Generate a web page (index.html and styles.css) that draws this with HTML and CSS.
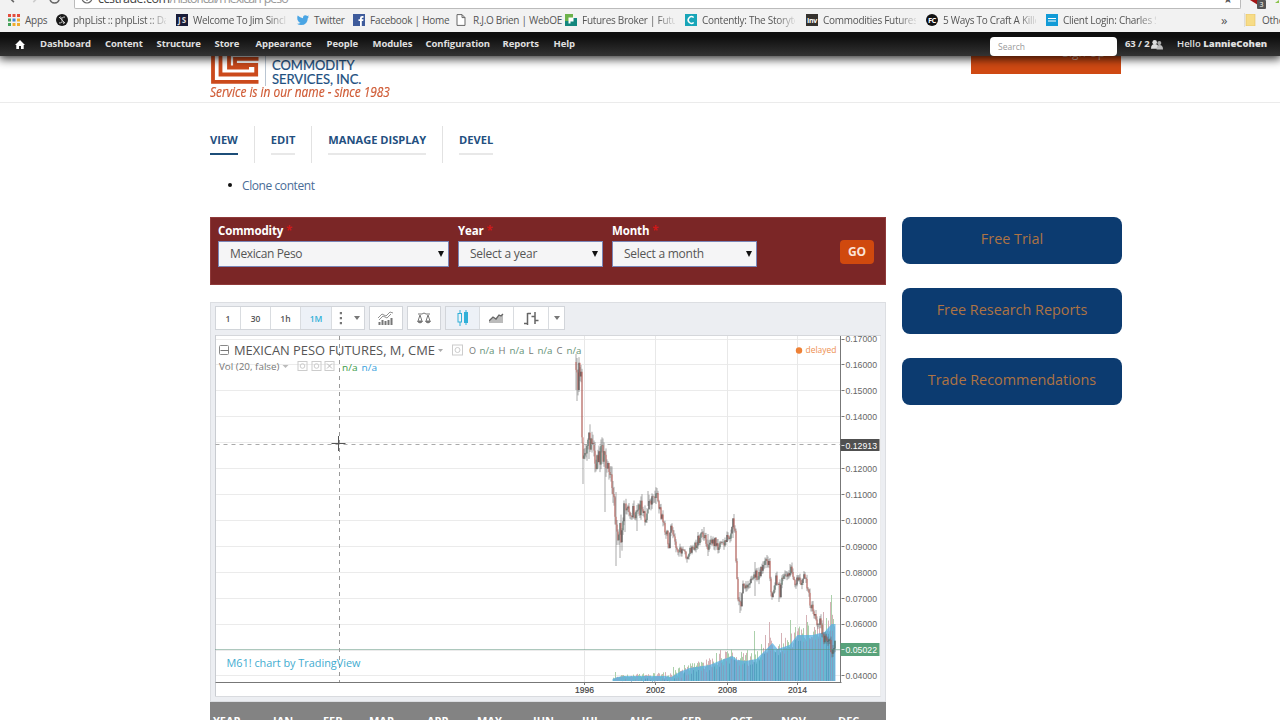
FILE: index.html
```html
<!DOCTYPE html>
<html lang="en">
<head>
<meta charset="utf-8">
<title>Mexican Peso</title>
<link rel="stylesheet" href="styles.css">
</head>
<body>
<div class="browser">
  <div class="address-row">
    <svg class="nav-icons" width="80" height="6" viewBox="0 0 80 6" fill="none" stroke-width="1.7">
      <path d="M9 -4 L15 2" stroke="#666"/><path d="M42 -4 L36 2" stroke="#ccc"/>
      <circle cx="59" cy="-2" r="5" stroke="#666"/>
    </svg>
    <div class="address"><svg width="12" height="12" viewBox="0 0 12 12" fill="none" stroke="#666" stroke-width="1.2"><circle cx="6" cy="6" r="5"/><path d="M6 5v4M6 2.5v1.2"/></svg><span><b>ccstrade.com</b>/historical/mexican-peso</span><i>★</i></div>
    <svg class="ext" width="38" height="10" viewBox="0 0 38 10"><path d="M9 0h10v2l-2 3z" fill="#a31414"/><rect x="16" y="0" width="9" height="9" rx="1" fill="#555"/><text x="18.500" y="7" font-size="7" fill="#fff" font-family="Open Sans">3</text><path d="M34 3l4-3v3z" fill="#8bc34a"/></svg>
  </div>
  <div class="bookmarks">
    <div class="bm"><svg viewBox="0 0 12 12"><g><path fill="#e34d3d" d="M0 0h3v3H0zM4.5 0h3v3h-3zM9 0h3v3H9z"/><path fill="#45a35b" d="M0 4.5h3v3H0z"/><path fill="#4285d6" d="M4.500 4.500h3v3h-3z"/><path fill="#efad2e" d="M9 4.500h3v3H9zM4.500 9h3v3h-3zM9 9h3v3H9z"/><path fill="#45a35b" d="M0 9h3v3H0z"/></g></svg><span>Apps</span></div>
    <div class="bm fade"><svg viewBox="0 0 12 12"><circle cx="6" cy="6" r="6" fill="#1a1a1a"/><path d="M3 3l6 6M9 3q-4 0-3 3t-3 3M4.500 2.500l1 2M7 8l1 2" stroke="#ccc" fill="none"/></svg><span>phpList :: phpList :: Da</span></div>
    <div class="bm fade"><svg viewBox="0 0 12 12"><rect width="12" height="12" fill="#191c38"/><text x="2" y="9" font-size="8" font-weight="700" font-family="Open Sans" fill="#ddd" textLength="8">JS</text></svg><span>Welcome To Jim Sincl</span></div>
    <div class="bm"><svg viewBox="0 0 12 12"><path d="M0 9.700Q2 10 3.500 8.700 1.600 8.500 1.200 7 .1 5.800.3 4.300 0 3 .7 1.600 3 4 6 4.200 5.800 1.300 8.300 1.300q1.200 0 1.900.8l1.700-.6-1 1.500 1.100-.2-1.200 1.400Q10.500 11 4 11 1.700 10.900 0 9.700z" fill="#4aa5e4"/></svg><span>Twitter</span></div>
    <div class="bm"><svg viewBox="0 0 12 12"><rect width="12" height="12" fill="#3e5b9b"/><path d="M7 12V7H5.500V5.200H7V4q0-2 2.100-2h1.400v1.800h-1q-.7 0-.7.700v.7h1.700L10.200 7H8.800v5z" fill="#fff"/></svg><span>Facebook | Home</span></div>
    <div class="bm"><svg viewBox="0 0 12 12"><path d="M1 .6h5l3 3v7.800H1zM6 .6v3h3" fill="#fff" stroke="#666"/></svg><span>R.J.O Brien | WebOE</span></div>
    <div class="bm fade"><svg viewBox="0 0 12 12"><path fill="#6cb24b" d="M0 0h8v7H0z"/><path fill="#13877d" d="M0 7h8V4h4v8H0z"/><path fill="#fff" d="M3.500 3.500h5v4h-3v2h-2z"/></svg><span>Futures Broker | Future</span></div>
    <div class="bm fade"><svg viewBox="0 0 12 12"><rect width="12" height="12" fill="#18a5b8"/><path d="M8.700 3.500A3.300 3.300 0 1 0 8.700 8.500" stroke="#fff" stroke-width="1.500" fill="none"/></svg><span>Contently: The Storyte</span></div>
    <div class="bm fade"><svg viewBox="0 0 12 12"><rect width="12" height="12" fill="#35322e"/><text x="1" y="9" font-size="7" font-weight="700" font-family="Open Sans" fill="#fff" textLength="10">Inv</text></svg><span>Commodities Futures</span></div>
    <div class="bm fade"><svg viewBox="0 0 12 12"><circle cx="6" cy="6" r="6" fill="#111"/><text x="2" y="8.700" font-size="7.500" font-weight="700" font-family="Open Sans" fill="#fff" textLength="8">FC</text></svg><span>5 Ways To Craft A Kille</span></div>
    <div class="bm fade"><svg viewBox="0 0 12 12"><rect width="12" height="12" fill="#129bd7"/><path d="M2 4.500h8M2 7h8" stroke="#fff" stroke-width="1.200"/></svg><span>Client Login: Charles S</span></div>
    <div class="more">»</div>
    <div class="bm other"><svg viewBox="0 0 12 12"><rect x="1" width="9" height="12" fill="#f7dc86" stroke="#e3c062" stroke-width=".6"/></svg><span>Other bookmarks</span></div>
  </div>
</div>
<nav class="admin">
  <div class="menu">
    <svg width="10" height="9" viewBox="0 0 10 9"><path d="M5 0L0 5h1.300v4H4V6h2v3h2.700V5H10z" fill="#fff"/></svg>
    <a>Dashboard</a><a>Content</a><a>Structure</a><a>Store</a><a>Appearance</a><a>People</a><a>Modules</a><a>Configuration</a><a>Reports</a><a>Help</a>
  </div>
  <div class="search">Search</div>
  <div class="users">63 / 2<svg width="12" height="11" viewBox="0 0 13 11"><circle cx="4" cy="3" r="2.500" fill="#ddd"/><path d="M0 10q0-5 4-5t5 5z" fill="#ddd"/><circle cx="9" cy="4" r="2.200" fill="#aaa"/><path d="M6 11q0-5 3.500-5t3.500 5z" fill="#bbb"/></svg></div>
  <div class="hello">Hello <b>LannieCohen</b></div>
</nav>
<header class="site-header">
  <div class="wrap">
    <div class="logo">
      <div class="logo-top">
        <svg width="48" height="34" viewBox="211 50 48 34" fill="none" stroke="#cb4a1c" stroke-width="3.800"><path d="M213 50V81.800H258.500M220.500 50V74.500H256.200V65H235V58.800H258.500"/><path d="M229 50V67.500H249"/></svg>
        <div class="logo-name"><span>CAPITOL</span><span>COMMODITY</span><span>SERVICES, INC.</span></div>
      </div>
      <div class="tagline">Service is in our name - since 1983</div>
    </div>
    <div class="signup"><span>Sign Up</span></div>
  </div>
</header>
<main class="wrap main">
  <div class="content">
    <div class="tabs"><div><a class="on">VIEW</a></div><div><a>EDIT</a></div><div><a>MANAGE DISPLAY</a></div><div><a>DEVEL</a></div></div>
    <div class="clone"><i></i><a>Clone content</a></div>
    <form class="filter">
      <div><label>Commodity <em>*</em></label><div class="select">Mexican Peso<i></i></div></div>
      <div><label>Year <em>*</em></label><div class="select">Select a year<i></i></div></div>
      <div><label>Month <em>*</em></label><div class="select">Select a month<i></i></div></div>
      <div class="go">GO</div>
    </form>
    <section class="widget">
      <div class="tools">
        <div class="group g1"><span>1</span><span>30</span><span>1h</span><span class="sel">1M</span><span><svg width="4" height="14" viewBox="0 0 4 14"><path d="M.8 1h2.200v2.200H.8zM.8 6h2.200v2.200H.8zM.8 11h2.200v2.200H.8z" fill="#777"/></svg></span><span><i class="caret"></i></span></div>
        <div class="group g2"><span><svg width="16" height="14" viewBox="0 0 16 14" fill="none" stroke="#777"><path d="M1.500 14v-3M4.500 14v-5M7.500 14v-4M10.500 14v-5M13.500 14V7" stroke-width="2"/><path d="M0 7l4-4 4 2 4-4 3 1M1 9l4-4 4 2 4-4" stroke-width=".8"/></svg></span></div>
        <div class="group g2"><span><svg width="14" height="12" viewBox="0 0 14 12" fill="none" stroke="#777"><path d="M1 2h4l2-1 2 1h4M3 3L1 9h4zM11 3L9 9h4z"/><path d="M.5 9.500q2.500 3 5 0zM8.500 9.500q2.500 3 5 0z" fill="#777"/></svg></span></div>
        <div class="group g3"><span class="sel"><svg width="12" height="16" viewBox="0 0 12 16" fill="none" stroke="#31b0d8"><path d="M3 0v3m0 9v4M9 0v2m0 11v2"/><rect x="1" y="3.500" width="3.500" height="8.500"/><rect x="7.500" y="2.500" width="3" height="10" fill="#31b0d8"/></svg></span><span><svg width="15" height="10" viewBox="0 0 15 10"><path d="M0 8l4-4 3 2 3-3 4-2v9H0z" fill="#bbb"/><path d="M0 8l4-4 3 2 3-4 2 1 2-2" stroke="#666" stroke-width="1.300" fill="none"/></svg></span><span><svg width="15" height="15" viewBox="0 0 15 15" fill="none" stroke="#666" stroke-width="1.500"><path d="M3.500 2v12M0 12.500h3.500M3.500 2.500h3.500M11 1v12M7.500 5.500H11M11 9.500h3.500"/></svg></span><span><i class="caret"></i></span></div>
      </div>
      <svg class="chart" id="chart" width="666" height="362" viewBox="215.500 335 666 362"></svg>
    </section>
    <div class="months"><span>YEAR</span><span>JAN</span><span>FEB</span><span>MAR</span><span>APR</span><span>MAY</span><span>JUN</span><span>JUL</span><span>AUG</span><span>SEP</span><span>OCT</span><span>NOV</span><span>DEC</span></div>
  </div>
  <aside><a>Free Trial</a><a>Free Research Reports</a><a>Trade Recommendations</a></aside>
</main>
<script src="chart.js"></script>
</body>
</html>
```
FILE: styles.css
```css
* { box-sizing: border-box; }
body { margin: 0; width: 1280px; height: 720px; overflow: hidden; background: #fff; font-family: "Open Sans", "Noto Sans", sans-serif; color: #444; }
.wrap { width: 912px; margin-left: 210px; display: flex; }

.browser { height: 32px; background: #f2f2f2; overflow: hidden; }
.address-row { height: 9px; display: flex; }
.nav-icons { width: 74px; height: 6px; overflow: hidden; flex: none; }
.address { width: 1167px; height: 9px; flex: none; border: 1px solid #bbb; border-top: 0; background: #fff; display: flex; align-items: flex-end; padding-left: 6px; gap: 5px; overflow: hidden; border-radius: 0 0 2px 2px; font: 12.500px/14px "Open Sans", sans-serif; color: #999; }
.address svg { margin-bottom: 4px; flex: none; }
.address span { width: 1126px; margin-bottom: 2px; flex: none; letter-spacing: -1.050px; }
.address b { font-weight: 400; color: #444; letter-spacing: -.5px; }
.address i { font-style: normal; color: #555; margin: 0 0 2px -6px; font-size: 11px; }
.bookmarks { height: 22px; display: grid; grid-template-columns: 48px 120px 121px 56px 103px 109px 120px 121px 120px 120px 172px 26px 1fr; padding-left: 8px; align-items: center; font-size: 10px; color: #555; }
.bm { display: flex; gap: 5px; align-items: center; white-space: nowrap; overflow: hidden; letter-spacing: -.28px; }
.bm svg { width: 12px; height: 12px; flex: none; }
.fade span { width: 93px; overflow: hidden; -webkit-mask-image: linear-gradient(90deg, #000 80%, rgba(0,0,0,.15) 100%); mask-image: linear-gradient(90deg, #000 80%, rgba(0,0,0,.15) 100%); }
.more { font-size: 13px; padding-left: 3px; line-height: 18px; }
.other { border-left: 1px solid #ddd; height: 14px; }

.admin { position: relative; height: 24px; display: grid; grid-template-columns: 990px 127px 60px 1fr; background: linear-gradient(#0e0e0e 20%, #333); box-shadow: 0 2px 10px 1px rgba(0,0,0,.8); clip-path: inset(0 0 -14px 0); color: #e0e0e0; font-size: 9.500px; font-weight: 700; z-index: 3; line-height: 24px; }
.menu { display: grid; grid-template-columns: 25px 65px 51.500px 58px 41px 71px 46px 53px 77px 51px 40px; padding-left: 15px; align-items: center; letter-spacing: -.08px; }
.menu svg { display: block; }
.search { height: 19px; margin-top: 5px; border-radius: 4px; background: #fff; color: #999; font-size: 8.500px; font-weight: 400; line-height: 20px; padding-left: 8px; }
.users { padding-left: 8px; display: flex; align-items: center; white-space: nowrap; letter-spacing: -.1px; }
.users svg { margin-left: 1px; }
.hello { font-weight: 600; white-space: nowrap; }

.site-header { height: 47px; border-bottom: 1px solid #ebebeb; }
.site-header .wrap { justify-content: space-between; align-items: flex-start; width: 911px; }
.logo { margin-top: -6px; }
.logo-top { display: flex; height: 34px; margin-left: 1px; gap: 6px; }
.logo-name { border-left: 1px solid #b9c5d2; padding-left: 6px; display: flex; flex-direction: column; justify-content: flex-end; font: 13px/14px Lato, sans-serif; color: #214f80; -webkit-text-stroke: .2px #214f80; white-space: nowrap; height: 36px; letter-spacing: -.03px; }
.tagline { font: italic 14px/16px "Open Sans", sans-serif; color: #cf5a34; transform: scaleX(.85); transform-origin: 0 0; white-space: nowrap; -webkit-text-stroke: .2px #cf5a34; letter-spacing: -.02px; }
.signup { width: 150px; height: 18px; background: #cf4913; color: #e9b49e; display: flex; justify-content: flex-end; align-items: flex-start; padding-right: 16px; font-size: 12px; line-height: 1; }
.signup span { margin-top: -9px; }

.main { height: 617px; gap: 16px; }
.content { width: 676px; }
.tabs { display: flex; margin-top: 23px; height: 37px; color: #234f80; font-size: 11.100px; font-weight: 700; }
.tabs div { padding-right: 16px; margin-right: 16px; border-right: 1px solid #e2e2e2; }
.tabs div:last-child { border: 0; }
.tabs a { display: block; height: 29px; line-height: 27px; border-bottom: 2px solid #e8e8e8; white-space: nowrap; }
.tabs a.on { border-color: #1c4d78; }
.clone { display: flex; align-items: center; gap: 10px; margin: 13px 0 0 18px; height: 18px; font-size: 12px; letter-spacing: -.42px; color: #4a6c97; }
.clone i { width: 4px; height: 4px; border-radius: 50%; background: #111; }
.filter { margin: 23px 0 0; height: 68px; background: #7b2626; border: 1px solid #8f3a3a; display: grid; grid-template-columns: 240px 154px 228px 34px; padding: 4px 0 0 7px; color: #fff; font-size: 11.500px; letter-spacing: -.15px; font-weight: 700; }
.filter label { display: block; height: 19px; line-height: 18px; }
.filter em { color: #d01818; font-style: normal; }
.select { width: 231px; height: 26px; border: 1px solid #7a86b8; background: #f5f5f6; color: #555; font-size: 12px; letter-spacing: -.38px; font-weight: 400; line-height: 24px; padding: 0 4px 0 11px; display: flex; justify-content: space-between; align-items: center; }
.select i { border: 3px solid transparent; border-top: 6px solid #111; border-bottom: 0; }
.filter div:nth-child(2) .select, .filter div:nth-child(3) .select { width: 145px; letter-spacing: -.25px; }
.go { width: 34px; height: 24px; margin-top: 18px; border-radius: 4px; background: #d0490e; text-align: center; line-height: 23px; font-size: 12px; color: #fbe3d8; }

.widget { margin-top: 17px; height: 400px; background: #eceef2; border: 1px solid #dcdee2; padding: 3px 4px 0; }
.tools { display: flex; gap: 4px; height: 25px; margin-bottom: 4px; color: #555; font-size: 8.500px; font-weight: 600; }
.group { display: grid; height: 24px; border: 1px solid #d2d5da; background: #fff; }
.group span { display: flex; align-items: center; justify-content: center; border-right: 1px solid #d9dce0; }
.group span:last-child, .g1 span:nth-child(5) { border: 0; }
.g1 { width: 150px; grid-template-columns: 25px 30px 30px 31px 17px 1fr; }
.g2 { width: 34px; }
.g3 { width: 120px; grid-template-columns: 34px 34px 35px 1fr; }
.group .sel { background: #edf1f7; color: #31b0d8; }
.caret { border: 3.500px solid transparent; border-top: 4px solid #777; border-bottom: 0; }
.chart { display: block; background: #fff; font-family: "Open Sans", sans-serif; }
.months { height: 18px; background: #838383; color: #fff; font-size: 11px; font-weight: 700; display: grid; grid-template-columns: 60px 50px 46px 58px 50px 56px 49px 47px 53px 48px 51px 57px 1fr; padding: 10.500px 0 0 3px; line-height: 15px; overflow: hidden; }

aside { width: 220px; padding-top: 114px; display: flex; flex-direction: column; gap: 24px; }
aside a { height: 46.500px; border-radius: 8px; background: #0c3b70; color: #ae7344; font-size: 14.400px; line-height: 44px; text-align: center; flex: none; }
```
FILE: chart.js
```js
const NS = 'http://www.w3.org/2000/svg';
const chart = document.getElementById('chart');
function add(tag, attrs, text) {
  const el = document.createElementNS(NS, tag);
  for (const k in attrs) el.setAttribute(k, attrs[k]);
  if (text) el.textContent = text;
  chart.appendChild(el);
}
function path(d, stroke, extra) {
  add('path', Object.assign({ d: d, stroke: stroke, fill: 'none' }, extra));
}
function label(x, y, text, width, size, fill, extra) {
  add('text', Object.assign({ x: x, y: y, textLength: width, 'font-size': size, fill: fill, lengthAdjust: 'spacingAndGlyphs' }, extra), text);
}
let seed = 17;
function rnd() { seed = (seed * 16807) % 2147483647; return seed / 2147483647; }
function at(points, x) {
  for (let i = 1; i < points.length; i++) {
    if (x <= points[i][0]) {
      const a = points[i - 1], b = points[i];
      return a[1] + (b[1] - a[1]) * (x - a[0]) / (b[0] - a[0]);
    }
  }
  return points[points.length - 1][1];
}

// Grid
for (let i = 0; i < 14; i++) path('M216 ' + (Math.round(338.500 + i * 25.92) + .5) + 'H841', '#ebebeb');
[585, 656, 728, 798].forEach(x => path('M' + x + ' 336V682', '#e8e8e8'));

// Volume bars with moving-average area
const vol = [[613,679],[618,677],[625,676],[666,676],[672,677],[680,672],[690,668],[710,665],[722,660],[733,656],[738,660],[746,661],[757,659],[766,650],[773,643],[778,649],[790,645],[798,635],[813,635],[825,632],[832,624],[836,624]];
const volSpikes = { 616: 672, 674: 667, 717: 653, 721: 650, 727: 652, 748: 650, 755: 631, 766: 635, 770: 622, 782: 633, 791: 620, 796: 627, 807: 615, 808: 622, 815: 627, 824: 612, 827: 618, 831: 602, 832: 595, 834: 619 };
for (let x = 614; x < 836; x++) {
  const top = volSpikes[x] || at(vol, x) + (rnd() * 16 - 10) * Math.min(1, (x - 600) / 160);
  path('M' + x + ' ' + Math.min(top, 679).toFixed(1) + 'V681', rnd() > .5 ? '#d3adb2' : '#a6cda6', { 'stroke-width': .95 });
}
add('path', { d: 'M613 681L' + vol.map(p => p.join(' ')).join('L') + 'V681Z', fill: '#51aee2', opacity: .72 });
for (let x = 623; x < 835; x += 2 + Math.floor(rnd() * 2)) path('M' + x + ' ' + (at(vol, x) + 2 + rnd() * 5) + 'V681', rnd() > .5 ? '#8c8fb5' : '#3f91b2', { opacity: .55 });

// Monthly candles
const price = [[576,365],[577,376],[578,384],[579,370],[581,370],[582,430],[583,462],[584,457],[586,446],[589,440],[592,448],[595,462],[600,456],[604,452],[606,463],[609,477],[612,485],[614,495],[616,520],[617,537],[619,526],[621,536],[623,513],[626,509],[637,512],[641,507],[645,518],[648,504],[650,497],[654,503],[658,497],[661,515],[664,527],[667,535],[669,545],[671,530],[674,538],[677,549],[680,550],[686,556],[691,552],[698,540],[704,535],[708,547],[713,541],[719,546],[726,541],[731,533],[733,523],[735,532],[736,560],[738,595],[741,605],[743,587],[750,580],[754,572],[757,577],[762,568],[767,561],[769,562],[770,580],[772,598],[774,590],[776,580],[778,581],[780,596],[782,581],[787,576],[791,568],[794,580],[800,582],[804,578],[808,586],[810,605],[814,613],[818,627],[820,623],[824,640],[828,637],[832,652],[834,651],[835,640]];
const spikes = { 576: [354, 390], 577: [358, 401], 580: [367, 381], 583: [443, 484], 589: [432, 459], 605: [452, 512], 616: [492, 566], 617: [520, 545], 620: [523, 558], 625: [504, 532], 637: [505, 531], 648: [491, 506], 704: [527, 541], 708: [534, 556], 733: [518, 538], 740: [592, 613], 755: [562, 596], 767: [555, 568], 779: [582, 602], 790: [564, 577] };
let prev = 362;
for (let x = 576; x < 836; x++) {
  const mid = at(price, x);
  const scale = x < 625 ? 1.5 : x < 660 ? 1.15 : .75;
  const close = mid + (rnd() - .5) * 13 * scale;
  let hi = Math.min(prev, close) - rnd() * 6 * scale;
  let lo = Math.max(prev, close) + rnd() * 6 * scale;
  if (spikes[x]) { hi = spikes[x][0]; lo = spikes[x][1]; }
  path('M' + (x + .500) + ' ' + hi.toFixed(1) + 'V' + lo.toFixed(1), '#666', { 'stroke-width': .7, opacity: .8 });
  const falling = close > prev;
  path('M' + (x + .500) + ' ' + prev.toFixed(1) + 'V' + close.toFixed(1), falling ? '#c8453a' : rnd() > .5 ? '#3f5d50' : '#333', { 'stroke-width': falling ? .9 : 1.1, opacity: .85 });
  prev = close;
}

// Axes
path('M215.500 335.500H881.500V697', '#d5d7db');
path('M216 335V697', '#c9ccd1');
path('M215 696.500H881', '#d9dbdf');
path('M841 336V682M216 682.500H842', '#777');
['0.17000', '0.16000', '0.15000', '0.14000', '', '0.12000', '0.11000', '0.10000', '0.09000', '0.08000', '0.07000', '0.06000', '', '0.04000'].forEach((t, i) => {
  if (!t) return;
  const y = 338.500 + i * 25.92;
  path('M842 ' + (Math.round(y) + .5) + 'h3', '#777');
  label(846, y + 3.800, t, 31.500, 9.500, '#666', { 'font-family': 'Liberation Sans' });
});
[['1996', 575.5], ['2002', 646.500], ['2008', 718.500], ['2014', 788.500]].forEach(t => {
  label(t[1], 693.300, t[0], 19, 9, '#444', { 'font-family': 'Liberation Sans', stroke: '#444', 'stroke-width': .2 });
  path('M' + (t[1] + 9.500) + ' 682v3', '#777');
});

// Last price and crosshair
path('M216 649.500H841', '#5b907a', { 'stroke-dasharray': '1 1' });
path('M216 444.500H841', '#aaa', { 'stroke-dasharray': '4 4' });
path('M340 336V682', '#999', { 'stroke-dasharray': '4 4' });
path('M332 443.500H346M339 436V451', '#555', { 'stroke-width': 1 });
add('rect', { x: 841, y: 439, width: 39, height: 12, fill: '#505050' });
add('rect', { x: 841, y: 643, width: 39, height: 13, fill: '#58a27b' });
path('M842 445.500h3M842 649.500h3', '#ddd');
label(846, 448.500, '0.12913', 31.500, 9.500, '#fff', { 'font-family': 'Liberation Sans' });
label(846, 653, '0.05022', 31.500, 9.500, '#fff', { 'font-family': 'Liberation Sans' });

// Legend
add('rect', { x: 220, y: 345.500, width: 9, height: 9, rx: 1, fill: 'none', stroke: '#888' });
path('M221 350.500h8', '#777');
label(234.500, 355, 'MEXICAN PESO FUTURES, M, CME', 201, 12.500, '#555');
add('path', { d: 'M438.500 349h5l-2.500 3z', fill: '#aaa' });
add('rect', { x: 453, y: 345, width: 10, height: 10, fill: 'none', stroke: '#ccc' });
add('circle', { cx: 458, cy: 350, r: 2.500, fill: 'none', stroke: '#ccc' });
[['O', 469.500, 7], ['H', 499, 7], ['L', 529, 5], ['C', 557, 6]].forEach(t => label(t[1], 353.500, t[0], t[2], 9, '#777'));
[480, 510, 538, 567].forEach(x => label(x, 353.500, 'n/a', 15, 9, '#639276'));
label(219.500, 370, 'Vol (20, false)', 60.500, 9.500, '#777');
add('path', { d: 'M283 365h6l-3 3z', fill: '#bbb' });
[298, 312, 325].forEach((x, i) => {
  add('rect', { x: x + .5, y: 361.500, width: 9, height: 9, fill: 'none', stroke: '#ccc' });
  if (i < 2) add('circle', { cx: x + 5, cy: 366, r: 2.300, fill: 'none', stroke: '#ccc' });
  else path('M327.500 363.500l5 5m0-5l-5 5', '#bbb');
});
label(342.500, 370.500, 'n/a', 15.500, 9.500, '#3a9a46');
label(362, 370.500, 'n/a', 15.500, 9.500, '#35a0dc');
add('circle', { cx: 799.500, cy: 350.500, r: 3.200, fill: '#ee8136' });
label(806, 353.300, 'delayed', 31, 9.500, '#ee8f50');
label(227, 667, 'M61! chart by TradingView', 134, 10.500, '#42acd0');
```
